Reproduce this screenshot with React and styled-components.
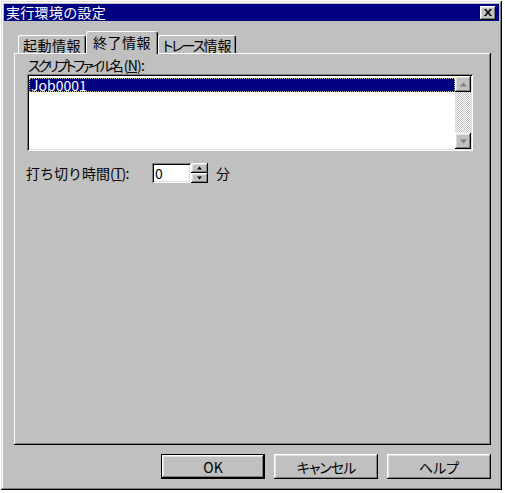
import React from "react";
import styled, { createGlobalStyle, css } from "styled-components";

const GlobalStyle = createGlobalStyle`
  html, body {
    margin: 0;
    padding: 0;
    background: #ffffff;
  }
  body {
    font-family: "Noto Sans CJK JP", "Noto Sans", sans-serif;
    font-size: 14px;
    color: #000;
  }
`;

const raised = css`
  box-shadow: inset -1px -1px #000, inset 1px 1px #fff, inset -2px -2px #808080, inset 2px 2px #dfdfdf;
`;

const sunken = css`
  box-shadow: inset 1px 1px #808080, inset -1px -1px #fff, inset 2px 2px #000, inset -2px -2px #dfdfdf;
`;

const Window = styled.div`
  margin: 1px 0 0 1px;
  width: 501px;
  height: 489px;
  box-sizing: border-box;
  padding: 3px;
  background: #c0c0c0;
  box-shadow: inset -1px -1px #000, inset 1px 1px #dfdfdf, inset -2px -2px #808080, inset 2px 2px #fff;
  display: flex;
  flex-direction: column;
`;

const TitleBar = styled.div`
  height: 17px;
  background: #000080;
  display: flex;
  align-items: center;
  justify-content: space-between;
  padding: 0 3px 0 2px;
`;

const Title = styled.span`
  color: #fff;
  font-size: 14px;
  line-height: 17px;
  letter-spacing: 0.3px;
`;

const CloseButton = styled.div`
  width: 16px;
  height: 14px;
  box-sizing: border-box;
  background: #c0c0c0;
  ${raised};
  display: flex;
  align-items: center;
  justify-content: center;
`;

const Body = styled.div`
  padding: 10px 8px 0 10px;
  display: flex;
  flex-direction: column;
`;

const TabRow = styled.div`
  height: 22px;
  display: flex;
  align-items: flex-end;
  padding-left: 4px;
  position: relative;
  z-index: 1;
`;

const Tab = styled.div`
  width: ${(p) => p.$w}px;
  height: ${(p) => (p.$active ? 23 : 18)}px;
  margin-bottom: ${(p) => (p.$active ? -1 : 0)}px;
  box-sizing: border-box;
  background: #c0c0c0;
  border-radius: 3px 3px 0 0;
  border-top: 1px solid #fff;
  border-left: 1px solid #fff;
  border-right: 1px solid #000;
  box-shadow: inset -1px 0 #808080;
  display: flex;
  align-items: ${(p) => (p.$active ? "flex-start" : "center")};
  justify-content: center;
  padding-top: ${(p) => (p.$active ? 2 : 0)}px;
  font-size: 14px;
  line-height: 16px;
  letter-spacing: ${(p) => (p.$tight ? 0 : 0.5)}px;
  white-space: nowrap;
`;

const Panel = styled.div`
  height: 392px;
  box-sizing: border-box;
  background: #c0c0c0;
  box-shadow: inset -1px -1px #000, inset 1px 1px #fff, inset -2px -2px #808080;
  padding: 5px 15px 0 14px;
  display: flex;
  flex-direction: column;
`;

const Label = styled.div`
  font-size: 14px;
  line-height: 14px;
  white-space: nowrap;
  u {
    text-decoration: underline;
  }
`;

const Paren = styled.span`
  letter-spacing: -0.8px;
`;

/* narrow kana, as the old half-width forms look */
const Kana = styled.span`
  font-feature-settings: "palt";
  letter-spacing: ${(p) => p.$ls || 0}px;
`;

const ListBox = styled.div`
  margin: 2px 0 0 -1px;
  width: 446px;
  height: 77px;
  box-sizing: border-box;
  padding: 2px;
  background: #fff;
  ${sunken};
  display: flex;
`;

const ListItems = styled.div`
  flex: 1;
  padding-top: 2px;
`;

const ListItem = styled.div`
  height: 14px;
  line-height: 14px;
  background: ${(p) => (p.$selected ? "#000080" : "transparent")};
  color: ${(p) => (p.$selected ? "#fff" : "#000")};
  outline: ${(p) => (p.$selected ? "1px dotted #c8c890" : "none")};
  outline-offset: -1px;
  padding-left: 2px;
  font-size: 14px;
`;

const ScrollBar = styled.div`
  width: 16px;
  display: flex;
  flex-direction: column;
  background: repeating-conic-gradient(#c0c0c0 0 25%, #fff 0 50%) 0 0 / 2px 2px;
`;

const ScrollTrack = styled.div`
  flex: 1;
`;

const ArrowButton = styled.div`
  width: ${(p) => p.$w || 16}px;
  height: ${(p) => p.$h || 16}px;
  box-sizing: border-box;
  background: #c0c0c0;
  ${raised};
  display: flex;
  align-items: center;
  justify-content: center;
`;

const FieldRow = styled.div`
  margin-top: 12px;
  display: flex;
  align-items: center;
  margin-left: -2px;
`;

const FieldLabel = styled(Label)`
  width: 126px;
`;

const SpinInput = styled.div`
  width: 39px;
  height: 20px;
  box-sizing: border-box;
  background: #fff;
  ${sunken};
  padding: 2px 3px;
  font-size: 14px;
  line-height: 16px;
`;

const Spinner = styled.div`
  display: flex;
  flex-direction: column;
`;

const Unit = styled.span`
  margin-left: 8px;
  font-size: 14px;
`;

const ButtonRow = styled.div`
  margin-top: 9px;
  display: flex;
  justify-content: flex-end;
  gap: 9px;
`;

const Button = styled.div`
  width: ${(p) => p.$w}px;
  height: 25px;
  box-sizing: border-box;
  background: #c0c0c0;
  display: flex;
  align-items: center;
  justify-content: center;
  font-size: 14px;
  white-space: nowrap;
  ${(p) =>
    p.$default
      ? css`
          border: 1px solid #000;
          box-shadow: inset -1px -1px #000, inset 1px 1px #fff, inset -2px -2px #808080, inset 2px 2px #dfdfdf;
        `
      : raised}
`;

const Arrow = ({ dir, color = "#000", size = 7 }) => (
  <svg width={size} height={Math.ceil(size / 2) + 1} viewBox="0 0 7 4">
    {dir === "up" ? (
      <path d="M3.5 0 L7 4 L0 4 Z" fill={color} />
    ) : (
      <path d="M0 0 L7 0 L3.5 4 Z" fill={color} />
    )}
  </svg>
);

const CloseIcon = () => (
  <svg width="8" height="7" viewBox="0 0 8 7">
    <path d="M0 0 L2 0 L4 2.5 L6 0 L8 0 L5 3.5 L8 7 L6 7 L4 4.5 L2 7 L0 7 L3 3.5 Z" fill="#000" />
  </svg>
);

export default function App() {
  return (
    <>
      <GlobalStyle />
      <Window>
        <TitleBar>
          <Title>実行環境の設定</Title>
          <CloseButton>
            <CloseIcon />
          </CloseButton>
        </TitleBar>
        <Body>
          <TabRow>
            <Tab $w={68}>
              <span>起動情報</span>
            </Tab>
            <Tab $w={72} $active>
              <span>終了情報</span>
            </Tab>
            <Tab $w={78} $tight>
              <span>
                <Kana $ls={-2}>トレース</Kana>情報
              </span>
            </Tab>
          </TabRow>
          <Panel>
            <Label>
              <Kana $ls={-3}>スクリプトファイル</Kana>名<Paren>(<u>N</u>):</Paren>
            </Label>
            <ListBox>
              <ListItems>
                <ListItem $selected>Job0001</ListItem>
              </ListItems>
              <ScrollBar>
                <ArrowButton>
                  <Arrow dir="up" color="#808080" />
                </ArrowButton>
                <ScrollTrack />
                <ArrowButton>
                  <Arrow dir="down" color="#808080" />
                </ArrowButton>
              </ScrollBar>
            </ListBox>
            <FieldRow>
              <FieldLabel>
                打ち切り時間<Paren>(<u>T</u>):</Paren>
              </FieldLabel>
              <SpinInput>0</SpinInput>
              <Spinner>
                <ArrowButton $w={17} $h={10}>
                  <Arrow dir="up" size={5} />
                </ArrowButton>
                <ArrowButton $w={17} $h={10}>
                  <Arrow dir="down" size={5} />
                </ArrowButton>
              </Spinner>
              <Unit>分</Unit>
            </FieldRow>
          </Panel>
          <ButtonRow>
            <Button $w={104} $default>
              OK
            </Button>
            <Button $w={104}>
              <Kana $ls={-1}>キャンセル</Kana>
            </Button>
            <Button $w={104}>
              <Kana>ヘルプ</Kana>
            </Button>
          </ButtonRow>
        </Body>
      </Window>
    </>
  );
}
